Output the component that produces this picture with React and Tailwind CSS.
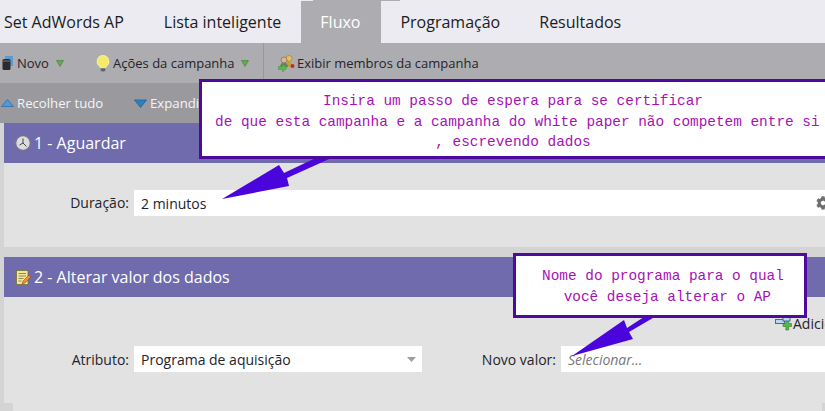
import { FaCog } from 'react-icons/fa';

const Tri = () => (
  <svg width="8" height="7" viewBox="0 0 8 7" className="flex-shrink-0">
    <path d="M0.5 .5h7L4 6.500z" fill="#6aa84f" stroke="#4f8a4a" strokeWidth="0.800" />
  </svg>
);

const BookIcon = () => (
  <svg width="12" height="16" viewBox="0 0 12 16" className="flex-shrink-0">
    <path d="M3 1h8v10H3z" fill="#5b9bd0" />
    <rect x="0.5" y="4" width="8" height="11" rx="1.5" fill="#2b2b2d" />
    <path d="M1 6h7" stroke="#77777a" strokeWidth="1" />
  </svg>
);

const BulbIcon = () => (
  <svg width="14" height="17" viewBox="0 0 14 17" className="flex-shrink-0">
    <path d="M7 0.500a6 6 0 0 0-3.400 10.900c.6.5.9 1 .9 1.600h5c0-.6.3-1.100.9-1.600A6 6 0 0 0 7 .5z" fill="#f6ea6a" stroke="#fbf5b0" strokeWidth="0.800" />
    <path d="M4.600 13.200h4.800v2.200l-1.200 1.100H5.800l-1.200-1.100z" fill="#66666a" />
  </svg>
);

const MembersIcon = () => (
  <svg width="17" height="17" viewBox="0 0 17 17" className="flex-shrink-0">
    <circle cx="11" cy="3.500" r="3" fill="#e2c25a" stroke="#8a6d2a" strokeWidth="0.500" />
    <path d="M7 12c0-3 2-5 4-5s4 2 4 5z" fill="#c2a040" />
    <circle cx="6" cy="5" r="3" fill="#e0b48a" stroke="#6a5230" strokeWidth="0.500" />
    <path d="M2 12c0-3 2-4.500 4-4.500s4 1.500 4 4.500z" fill="#6f7f60" />
    <circle cx="14.500" cy="11" r="2" fill="#b8302a" />
    <path d="M0.500 11.500h4v-2.500l4.500 4-4.500 4v-2.500h-4z" fill="#58b84a" stroke="#3a8a30" strokeWidth="0.400" />
  </svg>
);

const ClockIcon = () => (
  <svg width="16" height="16" viewBox="0 0 16 16" className="flex-shrink-0">
    <circle cx="8" cy="8" r="7.300" fill="#dcdce0" stroke="#77777e" strokeWidth="1.200" />
    <path d="M8 3.500V8l-3.500 2M8 8l3.500 3.500" stroke="#44444a" strokeWidth="1" fill="none" />
  </svg>
);

const NoteIcon = () => (
  <svg width="15" height="17" viewBox="0 0 15 17" className="flex-shrink-0">
    <rect x="0.500" y="1.500" width="11.500" height="14" fill="#f4e79a" stroke="#77703a" strokeWidth="0.800" />
    <path d="M2.500 4.500h7.500M2.500 7h7.500M2.500 9.500h5M2.500 12h3" stroke="#77703a" strokeWidth="0.800" />
    <path d="M6 15l1-3 6-6 2 2-6 6z" fill="#e8903a" stroke="#8a3a20" strokeWidth="0.500" />
  </svg>
);

const AddIcon = () => (
  <svg width="17" height="14" viewBox="0 0 17 14" className="flex-shrink-0">
    <rect x="0.500" y="2.500" width="9" height="4" fill="#bcd8ee" stroke="#3a6f9a" />
    <rect x="8" y="0.500" width="7" height="3.500" fill="#bcd8ee" stroke="#3a6f9a" />
    <path d="M8 6.500h2.800V4.500h2.900v2h2.800v3h-2.800v3.500h-2.900V9.500H8z" fill="#58b84a" stroke="#2f7a2a" strokeWidth="0.600" />
  </svg>
);

const Arrow = ({ points }) => (
  <svg className="absolute left-0 top-0 pointer-events-none" viewBox="0 0 825 411" width="825" height="411">
    <polygon points={points} fill="#4a05dc" />
  </svg>
);

function Callout({ className, children }) {
  return (
    <div className={`absolute flex items-center justify-center whitespace-pre bg-white border-[3px] border-[#4d0a9c] text-center text-[14.4px] leading-[20.5px] text-[#a612b4] font-['Liberation_Mono',monospace] ${className}`}>
      {children}
    </div>
  );
}

export default function App() {
  return (
    <div className="relative w-[825px] h-[411px] overflow-hidden bg-[#d4d4d4] font-['Open_Sans',sans-serif]">
      {/* tabs */}
      <div className="flex flex-col h-[43px] bg-[#ebebf1] text-[16px] text-[#1c1c22]">
        <div className="h-px w-[87px] ml-[313px] bg-[#adadb1]" />
        <div className="flex ml-[-16px]">
          <div className="px-5 flex items-center h-[42px] pb-px">Set AdWords AP</div>
          <div className="px-5 flex items-center h-[42px] pb-px">Lista inteligente</div>
          <div className="pl-[19px] pr-[21px] flex items-center h-[42px] pb-px bg-[#adadb1] text-white">Fluxo</div>
          <div className="pl-[19px] pr-5 flex items-center h-[42px] pb-px">Programação</div>
          <div className="pl-[19px] pr-5 flex items-center h-[42px] pb-px">Resultados</div>
        </div>
      </div>

      {/* toolbar */}
      <div className="flex items-center h-10 bg-[#adadb1] text-[13px] text-[#24242a]">
        <div className="flex items-center ml-[2px] w-[94px]">
          <BookIcon />
          <span className="ml-[3px] pt-[2px]">Novo</span>
          <span className="ml-[7px]"><Tri /></span>
        </div>
        <div className="flex items-center w-[167px]">
          <BulbIcon />
          <span className="ml-[3px] pt-[2px]">Ações da campanha</span>
          <span className="ml-[6px]"><Tri /></span>
        </div>
        <div className="w-px h-10 bg-[#98989c]" />
        <div className="flex items-center ml-[14px]">
          <MembersIcon />
          <span className="ml-[2px] pt-[2px]">Exibir membros da campanha</span>
        </div>
      </div>

      {/* collapse bar */}
      <div className="flex items-center h-10 bg-[#9a9a9e] text-[13.2px] text-[#f4f4f8]">
        <svg width="13" height="9" viewBox="0 0 13 9" className="ml-px flex-shrink-0">
          <path d="M6.500 .5L12.500 7.500H.5z" fill="#4f9bd8" stroke="#2f6fa8" strokeWidth="0.800" />
        </svg>
        <span className="ml-[3px] w-[117px] pt-[2px]">Recolher tudo</span>
        <svg width="13" height="9" viewBox="0 0 13 9" className="flex-shrink-0">
          <path d="M.5 1H12.500L6.500 8.500z" fill="#2f7fc0" stroke="#1f5f98" strokeWidth="0.800" />
        </svg>
        <span className="ml-[3px] pt-[2px]">Expandir tudo</span>
      </div>

      {/* step 1 */}
      <div className="ml-[4px]">
        <div className="flex items-center h-10 bg-[#6f6bad] text-[16px] text-white pl-[11px]">
          <ClockIcon />
          <span className="ml-[3px]">1 - Aguardar</span>
        </div>
        <div className="flex items-start h-[84px] bg-[#e2e2e2] pt-[27px] text-[14px]">
          <div className="w-[126px] pr-[1px] leading-[26px] text-right text-[#24242a]">Duração:</div>
          <div className="flex flex-1 items-center justify-between h-[26px] ml-[4px] pl-[7px] bg-white text-[#24242a]">
            <span>2 minutos</span>
            <FaCog size={14} className="mr-[-5px] text-[#6f6f72]" />
          </div>
        </div>

        <div className="h-[10px]" />

        {/* step 2 */}
        <div className="flex items-center h-10 bg-[#6f6bad] text-[16px] text-white pl-[12px]">
          <NoteIcon />
          <span className="ml-[3px]">2 - Alterar valor dos dados</span>
        </div>
        <div className="h-[106px] bg-[#e2e2e2] text-[14px] text-[#24242a]">
          <div className="flex items-center h-[49px] pl-[771px] pt-[19px] pb-[15px] whitespace-nowrap">
            <AddIcon />
            <span className="ml-[1px]">Adicionar</span>
          </div>
          <div className="flex items-center h-[26px]">
            <div className="w-[126px] pr-[1px] text-right">Atributo:</div>
            <div className="flex items-center justify-between w-[288px] h-[26px] ml-[4px] pl-[7px] pr-[6px] bg-white">
              <span>Programa de aquisição</span>
              <svg width="9" height="5" viewBox="0 0 9 5"><path d="M0 0h9L4.500 5z" fill="#a0a0a4" /></svg>
            </div>
            <div className="w-[134px] text-right">Novo valor:</div>
            <div className="flex flex-1 items-center h-[26px] ml-[5px] pl-[7px] bg-white italic text-[#77777c]">Selecionar...</div>
          </div>
        </div>
        <div className="h-2 ml-[9px] mr-[3px] bg-[#e2e2e2]" />
      </div>

      {/* callouts */}
      <Arrow points="222,199 279,165 284,173 322,155 338,155 287,178 289,186" />
      <Callout className="left-[199px] top-[79px] w-[640px] h-[80px] pr-[12px] pt-[6px]">
        <span>{'Insira um passo de espera para se certificar\n de que esta campanha e a campanha do white paper não competem entre si\n, escrevendo dados'}</span>
      </Callout>

      <Arrow points="572,356 624,320 627,328 647,315 658,315 629,332 633,339" />
      <Callout className="left-[513px] top-[253px] w-[294px] h-[65px] pl-[6px] pt-[2px]">
        <span>{'Nome do programa para o qual\n você deseja alterar o AP'}</span>
      </Callout>
    </div>
  );
}
